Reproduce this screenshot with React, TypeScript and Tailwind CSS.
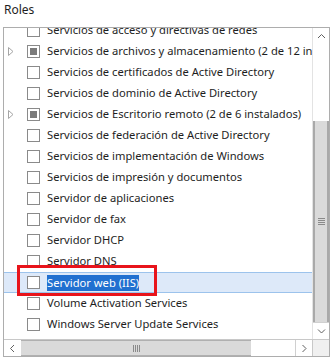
import type { ReactNode } from 'react';

type Role = { label: string; expandable?: boolean; partial?: boolean; selected?: boolean };

const ROLES: Role[] = [
  { label: 'Servicios de acceso y directivas de redes' },
  { label: 'Servicios de archivos y almacenamiento (2 de 12 instalados)', expandable: true, partial: true },
  { label: 'Servicios de certificados de Active Directory' },
  { label: 'Servicios de dominio de Active Directory' },
  { label: 'Servicios de Escritorio remoto (2 de 6 instalados)', expandable: true, partial: true },
  { label: 'Servicios de federación de Active Directory' },
  { label: 'Servicios de implementación de Windows' },
  { label: 'Servicios de impresión y documentos' },
  { label: 'Servidor de aplicaciones' },
  { label: 'Servidor de fax' },
  { label: 'Servidor DHCP' },
  { label: 'Servidor DNS' },
  { label: 'Servidor web (IIS)', selected: true },
  { label: 'Volume Activation Services' },
  { label: 'Windows Server Update Services' },
];

function Expander() {
  return (
    <svg width="6" height="9" viewBox="0 0 6 9" className="block">
      <path d="M0.5 0.5 L5 4.5 L0.5 8.5 Z" fill="none" stroke="#a6a6a6" strokeWidth="1" />
    </svg>
  );
}

function Checkbox({ partial }: { partial?: boolean }) {
  return (
    <div className="w-[13px] h-[13px] shrink-0 border border-[#8a8a8a] bg-white flex items-center justify-center">
      {partial && <div className="w-[7px] h-[7px] bg-[#7b7b7b]" />}
    </div>
  );
}

function RoleRow({ role }: { role: Role }) {
  return (
    <div
      className={
        role.selected
          ? 'h-[21px] flex items-center bg-[#dde9f9] border-y border-[#9cc3ec]'
          : 'h-[21px] flex items-center'
      }
    >
      <div className="w-[23px] pl-[4px] shrink-0 flex items-center">{role.expandable && <Expander />}</div>
      <Checkbox partial={role.partial} />
      <span
        className={
          role.selected
            ? 'ml-[7px] leading-[16px] bg-[#2170d0] text-white'
            : 'ml-[7px] text-[#1e1e1e]'
        }
      >
        {role.label}
      </span>
    </div>
  );
}

function ArrowBox({ children, className }: { children: ReactNode; className?: string }) {
  return <div className={`flex items-center justify-center shrink-0 ${className ?? ''}`}>{children}</div>;
}

function Chevron({ dir }: { dir: 'up' | 'down' | 'left' | 'right' }) {
  const d = {
    up: 'M1 5 L4.5 1.5 L8 5',
    down: 'M1 1.5 L4.5 5 L8 1.5',
    left: 'M5 1 L1.5 4.5 L5 8',
    right: 'M1.5 1 L5 4.5 L1.5 8',
  }[dir];
  const horiz = dir === 'up' || dir === 'down';
  return (
    <svg width={horiz ? 9 : 7} height={horiz ? 7 : 9} viewBox={horiz ? '0 0 9 7' : '0 0 7 9'}>
      <path d={d} fill="none" stroke="#606060" strokeWidth="1" />
    </svg>
  );
}

export default function App() {
  return (
    <div className="relative w-[334px] h-[363px] bg-white font-['Noto_Sans',sans-serif] text-[#1e1e1e]">
      <div className="pl-[4px] pt-[1px] h-[27px] text-[12px] leading-[17px]">Roles</div>

      <div className="ml-[3px] w-[327px] h-[330px] border border-[#adadad] grid grid-cols-[308px_17px] grid-rows-[311px_17px] text-[11.2px]">
        {/* list viewport */}
        <div className="overflow-hidden whitespace-nowrap">
          <div className="-mt-[8px]">
            {ROLES.map(r => (
              <RoleRow key={r.label} role={r} />
            ))}
          </div>
        </div>

        {/* vertical scrollbar */}
        <div className="flex flex-col bg-white border-l border-[#e3e3e3]">
          <ArrowBox className="h-[17px]">
            <Chevron dir="up" />
          </ArrowBox>
          <div className="h-[76px]" />
          <div className="flex-1 bg-[#dadada] border-x-2 border-[#a9a9a9] flex items-center justify-center">
            <div className="flex flex-col gap-[1px]">
              <div className="w-[7px] h-[1px] bg-[#8a8a8a]" />
              <div className="w-[7px] h-[1px] bg-[#8a8a8a]" />
              <div className="w-[7px] h-[1px] bg-[#8a8a8a]" />
              <div className="w-[7px] h-[1px] bg-[#8a8a8a]" />
            </div>
          </div>
          <ArrowBox className="h-[17px] border-t border-[#d0d0d0]">
            <Chevron dir="down" />
          </ArrowBox>
        </div>

        {/* horizontal scrollbar */}
        <div className="flex bg-white border-t border-[#c8c8c8]">
          <ArrowBox className="w-[17px]">
            <Chevron dir="left" />
          </ArrowBox>
          <div className="w-[230px] bg-[#dadada] border-y border-[#b0b0b0] flex items-center justify-center">
            <div className="flex gap-[1px]">
              <div className="w-[1px] h-[7px] bg-[#8a8a8a]" />
              <div className="w-[1px] h-[7px] bg-[#8a8a8a]" />
              <div className="w-[1px] h-[7px] bg-[#8a8a8a]" />
              <div className="w-[1px] h-[7px] bg-[#8a8a8a]" />
            </div>
          </div>
          <div className="flex-1" />
          <ArrowBox className="w-[17px] border-l border-[#d0d0d0]">
            <Chevron dir="right" />
          </ArrowBox>
        </div>
        <div className="bg-[#f0f0f0] border-t border-l border-[#c8c8c8]" />
      </div>

      {/* red annotation */}
      <div className="absolute left-[17px] top-[265px] w-[140px] h-[31px] border-[3px] border-[#e8141b]" />
    </div>
  );
}
